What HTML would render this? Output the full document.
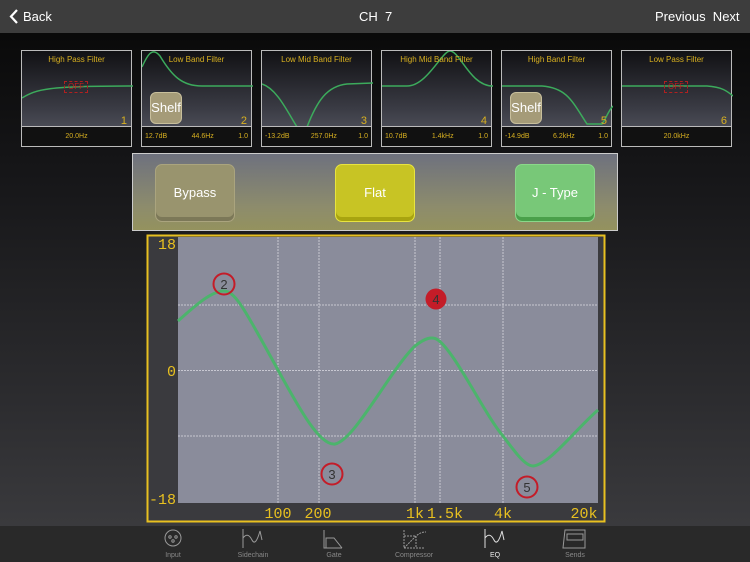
<!DOCTYPE html>
<html><head><meta charset="utf-8"><style>
*{margin:0;padding:0;box-sizing:border-box}
body{width:750px;height:562px;overflow:hidden;background:linear-gradient(#0a0a0a 33px,#141416 150px,#2c2c2f 400px,#3a3a3d 525px);font-family:"Liberation Sans",sans-serif;position:relative}
.nav{position:absolute;left:0;top:0;width:750px;height:33px;background:#3d3d3d;color:#fff;font-size:13px}
.nav span{position:absolute;top:9px}
.fp{position:absolute;top:50px;width:111px;height:97px;border:1px solid #bbb;background:linear-gradient(#111114,#3a3b44 60%,#5a5c66)}
.fp .t{position:absolute;top:4px;width:100%;text-align:center;color:#d8b020;font-size:8px}
.fp .n{position:absolute;right:4px;top:64px;color:#d8b020;font-size:11px}
.fp .b{position:absolute;left:0;right:0;bottom:0;height:20px;background:#111;border-top:1px solid #bbb;color:#d8b020;font-size:7px;display:flex;justify-content:space-between;align-items:center;padding:0 3px}
.fp svg{position:absolute;left:0;top:0}
.shelf{position:absolute;left:8px;top:41px;width:32px;height:32px;border-radius:6px;background:#a59b78;border:1px solid #c8bf9c;color:#fff;font-size:13px;line-height:30px;text-align:center}
.off{position:absolute;left:42px;top:30px;width:24px;height:12px;border:1px dashed #b02020;color:#c02020;font-size:8px;line-height:10px;text-align:center}
.bp{position:absolute;left:132px;top:153px;width:486px;height:78px;border:1px solid #ccc;background:linear-gradient(#6e717e,#8d8c6c 70%,#94925e)}
.btn{position:absolute;top:10px;width:80px;height:58px;border-radius:7px;color:#fff;font-size:13px;text-align:center;line-height:56px}
.tab{position:absolute;top:526px;left:0;width:750px;height:36px;background:#292929}
.tab div{position:absolute;top:26px;font-size:7px;color:#888;text-align:center;width:60px}
</style></head><body>
<div class="nav"><svg style="position:absolute;left:9px;top:9px" width="10" height="15"><path d="M8,1 L2,7.5 L8,14" stroke="#fff" stroke-width="2.2" fill="none"/></svg><span style="left:23px">Back</span><span style="left:359px">CH&nbsp; 7</span><span style="left:655px">Previous&nbsp; Next</span></div>

<div class="fp" style="left:21px"><svg width="111" height="77"><path d="M0,47 C15,38 25,35 111,35" stroke="#3cab5c" stroke-width="1.5" fill="none"/></svg><div class="t">High Pass Filter</div><div class="off">OFF</div><div class="n">1</div><div class="b" style="justify-content:center">20.0Hz</div></div>
<div class="fp" style="left:141px"><svg width="111" height="77"><path d="M0,16 C5,5 10,-5 18,5 C30,25 40,35 60,35 L111,35" stroke="#3cab5c" stroke-width="1.5" fill="none"/></svg><div class="t">Low Band Filter</div><div class="shelf">Shelf</div><div class="n">2</div><div class="b"><span>12.7dB</span><span>44.6Hz</span><span>1.0</span></div></div>
<div class="fp" style="left:261px"><svg width="111" height="77"><path d="M0,33 C15,38 25,60 35,76 L45,76 C55,50 65,35 85,33 L111,32" stroke="#3cab5c" stroke-width="1.5" fill="none"/></svg><div class="t">Low Mid Band Filter</div><div class="n">3</div><div class="b"><span>-13.2dB</span><span>257.0Hz</span><span>1.0</span></div></div>
<div class="fp" style="left:381px"><svg width="111" height="77"><path d="M0,35 L25,35 C45,35 60,0 68,0 C78,0 88,35 111,35" stroke="#3cab5c" stroke-width="1.5" fill="none"/></svg><div class="t">High Mid Band Filter</div><div class="n">4</div><div class="b"><span>10.7dB</span><span>1.4kHz</span><span>1.0</span></div></div>
<div class="fp" style="left:501px"><svg width="111" height="77"><path d="M0,35 L40,35 C65,37 70,50 85,73 L100,73 C104,68 106,60 111,55" stroke="#3cab5c" stroke-width="1.5" fill="none"/></svg><div class="t">High Band Filter</div><div class="shelf">Shelf</div><div class="n">5</div><div class="b"><span>-14.9dB</span><span>6.2kHz</span><span>1.0</span></div></div>
<div class="fp" style="left:621px"><svg width="111" height="77"><path d="M0,35 L85,35 C100,36 105,40 111,45" stroke="#3cab5c" stroke-width="1.5" fill="none"/></svg><div class="t">Low Pass Filter</div><div class="off">OFF</div><div class="n">6</div><div class="b" style="justify-content:center">20.0kHz</div></div>

<div class="bp">
<div class="btn" style="left:22px;background:#99946e;border:1px solid #aaa47e;box-shadow:inset 0 -4px 0 #7c7858">Bypass</div>
<div class="btn" style="left:202px;background:#c8c424;border:1px solid #e8e440;box-shadow:inset 0 -4px 0 #a8a410">Flat</div>
<div class="btn" style="left:382px;background:#78c878;border:1px solid #8ad88a;box-shadow:inset 0 -4px 0 #4aa04a">J - Type</div>
</div>

<svg style="position:absolute;left:0;top:0" width="750" height="562">
<rect x="147.5" y="235.5" width="457" height="286" fill="#3a3a3e" stroke="#e8c020" stroke-width="2"/>
<rect x="178" y="237" width="420" height="266" fill="#8a8c9b"/>
<g stroke="#c8c8d2" stroke-width="1" stroke-dasharray="2 1">
<line x1="178" y1="305" x2="598" y2="305"/><line x1="178" y1="370.5" x2="598" y2="370.5"/><line x1="178" y1="436" x2="598" y2="436"/>
<line x1="278" y1="237" x2="278" y2="503"/><line x1="319" y1="237" x2="319" y2="503"/><line x1="415" y1="237" x2="415" y2="503"/><line x1="440" y1="237" x2="440" y2="503"/><line x1="503" y1="237" x2="503" y2="503"/>
</g>
<path d="M178,321 C195,306 210,292 223,291 C235,290 245,310 278,370 C300,410 320,446 335,444 C355,440 390,370 415,346 C425,338 432,336 438,340 C455,352 485,415 503,436 C515,452 525,466 533,466 C550,464 575,430 598,410" stroke="#4cb46c" stroke-width="3" fill="none"/>
<g font-family="Liberation Sans" font-size="13" text-anchor="middle">
<circle cx="224" cy="284" r="10.5" fill="none" stroke="#c41c28" stroke-width="2"/><text x="224" y="289" fill="#333">2</text>
<circle cx="436" cy="299" r="10.5" fill="#c41c28"/><text x="436" y="304" fill="#333">4</text>
<circle cx="332" cy="474" r="10.5" fill="none" stroke="#c41c28" stroke-width="2"/><text x="332" y="479" fill="#333">3</text>
<circle cx="527" cy="487" r="10.5" fill="none" stroke="#c41c28" stroke-width="2"/><text x="527" y="492" fill="#333">5</text>
</g>
<g font-family="Liberation Mono" font-size="15" fill="#e8c020">
<text x="176" y="249" text-anchor="end">18</text><text x="176" y="376" text-anchor="end">0</text><text x="176" y="504" text-anchor="end">-18</text>
<g text-anchor="middle"><text x="278" y="518">100</text><text x="318" y="518">200</text><text x="415" y="518">1k</text><text x="445" y="518">1.5k</text><text x="503" y="518">4k</text><text x="584" y="518">20k</text></g>
</g>
</svg>

<div class="tab">
<svg style="position:absolute;left:0;top:0" width="750" height="26" fill="none" stroke="#999" stroke-width="1">
<circle cx="173" cy="12" r="8"/><circle cx="170" cy="11" r="1.2"/><circle cx="176" cy="11" r="1.2"/><circle cx="173" cy="15" r="1.2"/>
<path d="M243,3 V22 M243,12 C246,8 249,8 252,14 C255,20 258,12 260,5 L262,14"/>
<path d="M324,4 V22 H342 M326,22 V12 H334 L342,22"/>
<path d="M404,4 V22 H424 M404,22 L416,10 C420,7 422,6 426,6 M404,10 H416 V22" stroke-dasharray="2 1"/>
<path d="M485,3 V22 M485,12 C488,8 491,8 494,14 C497,20 500,12 502,5 L504,14" stroke="#ddd"/>
<path d="M565,4 H585 V22 H563 Z M567,8 H583 V14 H567 Z"/>
</svg>
<div style="left:143px">Input</div><div style="left:223px">Sidechain</div><div style="left:304px">Gate</div><div style="left:384px">Compressor</div><div style="left:465px;color:#eee">EQ</div><div style="left:545px">Sends</div>
</div>
</body></html>
